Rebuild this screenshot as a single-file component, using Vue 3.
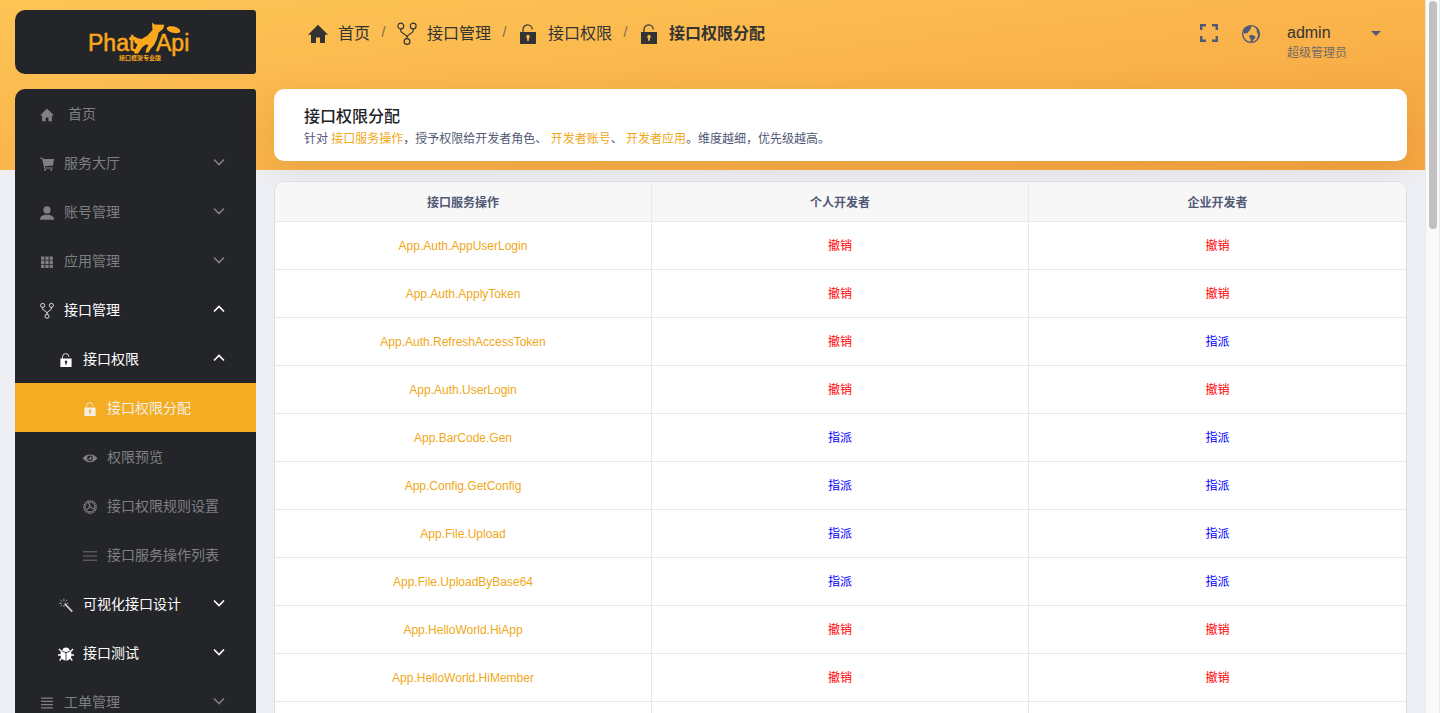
<script setup>
const icons = {
  home: '<path fill="currentColor" d="M10 0.8 0 10.8h3V19h5v-5.6h4V19h5v-8.2h3z"/>',
  cart: '<path fill="currentColor" d="M0 1h4l.8 2H20l-1.400 9-11.800 1.200.4 1.800H18v1.400H6L3 2.500H0z"/><circle cx="7.500" cy="18.200" r="1.500" fill="currentColor"/><circle cx="16" cy="18.200" r="1.500" fill="currentColor"/>',
  user: '<circle cx="10" cy="5.600" r="5.200" fill="currentColor"/><path fill="currentColor" d="M0 19.500c0-4.800 4-7 10-7s10 2.200 10 7z"/>',
  grid: '<path fill="currentColor" d="M1.500 2h4.700v4.700H1.500zM7.600 2h4.700v4.700H7.600zM13.700 2h4.700v4.700h-4.700zM1.500 8h4.700v4.700H1.500zM7.600 8h4.700v4.700H7.600zM13.700 8h4.700v4.700h-4.700zM1.500 14h4.700v4.700H1.500zM7.600 14h4.700v4.700H7.600zM13.700 14h4.700v4.700h-4.700z"/>',
  fork: '<g fill="none" stroke="currentColor" stroke-width="1.200"><circle cx="3.800" cy="2" r="2.900"/><circle cx="16.200" cy="2" r="2.900"/><circle cx="10" cy="17.500" r="2.900"/><path d="M3.800 5v2c0 2.500 6.200 3.100 6.200 6V14.600M16.200 5v2c0 2.500-6.200 3.100-6.200 6"/></g>',
  lock: '<path fill="currentColor" fill-rule="evenodd" d="M2 8h16v12H2zM10 10.800a1.900 1.900 0 0 0-.9 3.500v2.500h1.800v-2.500a1.900 1.900 0 0 0-.9-3.500z"/><path fill="none" stroke="currentColor" stroke-width="1.200" d="M5 8V5.500a4.600 4.600 0 0 1 9.200 0"/>',
  eye: '<path fill="currentColor" fill-rule="evenodd" d="M-.5 10.500C2.500 6.500 6 5 10 5s7.500 1.500 10.500 5.500C17.500 14.500 14 16 10 16S2.500 14.500-.5 10.500zM10 6.500a4 4 0 1 0 0 8 4 4 0 0 0 0-8z"/><path fill="currentColor" d="M10 8a2.500 2.500 0 1 1-2.500 2.500L10 10.500z"/>',
  gear: '<g fill="none" stroke="currentColor"><circle cx="10" cy="10" r="8.800" stroke-width="2.200" stroke-dasharray="2.400 1.200"/><circle cx="10" cy="10" r="7" stroke-width="1.400"/><circle cx="10" cy="10" r="1.600" stroke-width="1.200"/><path stroke-width="1.600" d="M10 8.500 7.500 3.500M11.500 10.800l4.800 2M8.700 11l-4 3.500"/></g>',
  lines: '<path fill="none" stroke="currentColor" stroke-width="1.200" d="M0 4h20M0 10h20M0 16h20"/>',
  wand: '<path fill="none" stroke="currentColor" stroke-opacity=".8" stroke-width="2.200" d="M8 8 19 19.500"/><path fill="none" stroke="currentColor" stroke-opacity=".7" stroke-width="1.100" d="M7 4.500V1M7 13V10M4 7.500H0M13.500 7.500H10.500M4.500 5 2 2.500M9.500 5 12 2.500M4.500 9.500 2 12"/>',
  bug: '<path fill="currentColor" d="M4.500 5.200C5.200 2 7.200.8 10 .8s4.800 1.200 5.500 4.400L10 7.500zM9.400 8.500 3.500 6C2.200 8 2 10 2.200 12.200c.3 4.200 3 6.700 7.200 7.300zM10.600 8.500 16.500 6c1.300 2 1.500 4 1.300 6.200-.3 4.200-3 6.700-7.200 7.300z"/><path fill="none" stroke="currentColor" stroke-width="2" d="M4.500 7.500 0 3M15.500 7.500 20 3M4 11.500H-1.500M16 11.500h5.500M4.500 14.500 1 19.500M15.500 14.500 19 19.500"/>',
  list: '<path fill="none" stroke="currentColor" stroke-width="1.800" d="M1.500 3h17M1.500 7.700h17M1.500 12.400h17M1.500 17.100h17"/>',
}

const menu = [
  { label: '首页', icon: 'home', level: 1, home: true },
  { label: '服务大厅', icon: 'cart', level: 1, arrow: 'down' },
  { label: '账号管理', icon: 'user', level: 1, arrow: 'down' },
  { label: '应用管理', icon: 'grid', level: 1, arrow: 'down' },
  { label: '接口管理', icon: 'fork', level: 1, arrow: 'up', open: true },
  { label: '接口权限', icon: 'lock', level: 2, arrow: 'up', open: true },
  { label: '接口权限分配', icon: 'lock', level: 3, active: true },
  { label: '权限预览', icon: 'eye', level: 3 },
  { label: '接口权限规则设置', icon: 'gear', level: 3 },
  { label: '接口服务操作列表', icon: 'lines', level: 3 },
  { label: '可视化接口设计', icon: 'wand', level: 2, arrow: 'down', open: true },
  { label: '接口测试', icon: 'bug', level: 2, arrow: 'down', open: true },
  { label: '工单管理', icon: 'list', level: 1, arrow: 'down' },
]

const crumbs = [
  { label: '首页', icon: 'home' },
  { label: '接口管理', icon: 'fork' },
  { label: '接口权限', icon: 'lock' },
  { label: '接口权限分配', icon: 'lock', current: true },
]

const rows = [
  { name: 'App.Auth.AppUserLogin', granted: [true, true] },
  { name: 'App.Auth.ApplyToken', granted: [true, true] },
  { name: 'App.Auth.RefreshAccessToken', granted: [true, false] },
  { name: 'App.Auth.UserLogin', granted: [true, true] },
  { name: 'App.BarCode.Gen', granted: [false, false] },
  { name: 'App.Config.GetConfig', granted: [false, false] },
  { name: 'App.File.Upload', granted: [false, false] },
  { name: 'App.File.UploadByBase64', granted: [false, false] },
  { name: 'App.HelloWorld.HiApp', granted: [true, true] },
  { name: 'App.HelloWorld.HiMember', granted: [true, true] },
]
</script>

<template>
  <div class="window">
    <div class="page">
      <aside class="sidebar">
        <a class="brand" href="#" aria-label="PhalApi">
          <svg class="logo" viewBox="0 0 120 55">
            <g fill="#fba91a">
              <text class="logo-word" x="7" y="36">Phat</text>
              <text class="logo-word" x="75" y="36">Api</text>
              <text class="logo-sub" x="38" y="45">接口框架专业版</text>
              <path d="M71 7.500 73.500 9.600 83.500 9.800 82 14 77.500 17.800 76 24 73 30 69.500 34 67.500 37.500 64.500 37.500 65.500 33.500 67.500 30 65 29.500 61 32.500 57 38.500 54 38.800 53 37 55 32.500 56.500 29.500 54 28 52.500 24.500 49 25 48.500 22.500 52 21 57 23.200 60.500 24 66.500 20.500 71.500 15z"/>
              <ellipse cx="92.500" cy="14.700" rx="7" ry="3.200" transform="rotate(14 92.500 14.700)"/>
            </g>
          </svg>
        </a>
        <nav class="menu">
          <a
            v-for="item in menu"
            :key="item.label + item.level"
            href="#"
            class="item"
            :class="['level-' + item.level, { open: item.open, active: item.active, first: item.home }]"
          >
            <svg class="item-icon" viewBox="0 0 20 20" v-html="icons[item.icon]"></svg>
            <span class="item-label">{{ item.label }}</span>
            <svg v-if="item.arrow" class="arrow" viewBox="0 0 12 8">
              <path :d="item.arrow === 'up' ? 'M1 6.500 6 1.500 11 6.500' : 'M1 1.500 6 6.500 11 1.500'" />
            </svg>
          </a>
        </nav>
      </aside>

      <div class="content">
        <header class="topbar">
          <nav class="crumbs">
            <template v-for="(crumb, i) in crumbs" :key="crumb.label">
              <span v-if="i" class="slash">/</span>
              <a href="#" class="crumb" :class="{ current: crumb.current }">
                <svg class="crumb-icon" viewBox="0 0 20 20" v-html="icons[crumb.icon]"></svg>
                <span>{{ crumb.label }}</span>
              </a>
            </template>
          </nav>
          <div class="tools">
            <button class="tool" type="button" aria-label="全屏">
              <svg viewBox="0 0 20 20"><path fill="none" stroke="currentColor" stroke-width="2.400" d="M2.200 7V2.200H7M13 2.200h4.800V7M17.800 13v4.800H13M7 17.800H2.200V13" /></svg>
            </button>
            <button class="tool globe" type="button" aria-label="语言">
              <svg viewBox="0 0 20 20">
                <circle cx="10" cy="10" r="8.400" fill="none" stroke="currentColor" stroke-width="1.400" />
                <path fill="currentColor" d="M2.500 6C4 3.500 6.500 1.800 10 1.500l-.3 1.700 1 1-1.700.6.3 1.500L7.500 7.500l-1.200 2-1.600-.7-.6 1.200-1.600-1.500zM8.500 11.200l2.500-.4 3.500 1.700-.6 2.200-1.900 1.200-1 2.400-1.300-.4-.1-3.100L8 13z" />
                <path fill="currentColor" d="M13.500 2.300c3 1.300 5.300 4.200 5.200 7.700 0 2.500-1 4.800-2.500 6.200l-.2-2 1-2.200-.3-2.700-1.200-1.800L16 6z" />
              </svg>
            </button>
            <button class="account" type="button">
              <span class="who">
                <span class="name">admin</span>
                <span class="role">超级管理员</span>
              </span>
              <span class="caret"></span>
            </button>
          </div>
        </header>

        <main>
          <section class="intro">
            <h1>接口权限分配</h1>
            <p>针对 <a href="#">接口服务操作</a>，授予权限给开发者角色、 <a href="#">开发者账号</a>、 <a href="#">开发者应用</a>。维度越细，优先级越高。</p>
          </section>
          <table class="grants">
            <thead>
              <tr>
                <th scope="col">接口服务操作</th>
                <th scope="col">个人开发者</th>
                <th scope="col">企业开发者</th>
              </tr>
            </thead>
            <tbody>
              <tr v-for="row in rows" :key="row.name">
                <td><a href="#">{{ row.name }}</a></td>
                <td v-for="(granted, i) in row.granted" :key="i">
                  <button type="button" :class="granted ? 'revoke' : 'assign'">{{ granted ? '撤销' : '指派' }}</button>
                </td>
              </tr>
              <tr>
                <td></td>
                <td></td>
                <td></td>
              </tr>
            </tbody>
          </table>
        </main>
      </div>
    </div>
    <div class="scrollbar"><div class="thumb"></div></div>
  </div>
</template>

<style>
body {
  overflow: hidden;
}
</style>

<style scoped>
.window,
.window * {
  box-sizing: border-box;
}
.window {
  display: flex;
  height: 100vh;
  overflow: hidden;
  font-family: "Liberation Sans", "Noto Sans CJK SC", sans-serif;
  font-size: 12px;
  color: #515975;
}
a {
  color: inherit;
  text-decoration: none;
}
button {
  padding: 0;
  border: 0;
  background: none;
  font: inherit;
  color: inherit;
  cursor: pointer;
}
svg {
  display: block;
  flex: none;
  overflow: visible;
}
.page {
  flex: 1;
  min-width: 0;
  display: flex;
  gap: 18px;
  padding: 0 18px 0 15px;
  overflow: hidden;
  background: linear-gradient(to bottom right, #fdc556 0%, #f7a440 100%) 0 0 / 100% 170px no-repeat #eeeff4;
}
.sidebar {
  flex: none;
  width: 241px;
  padding-top: 10px;
}
.brand {
  display: flex;
  justify-content: center;
  height: 64px;
  margin-bottom: 15px;
  padding: 5px 0 0 10px;
  border-radius: 10px 3px 3px 10px;
  background: #242529;
}
.logo {
  width: 120px;
  height: 55px;
}
.logo-word {
  font-size: 23px;
  stroke: #fba91a;
  stroke-width: 0.5px;
}
.logo-sub {
  font-size: 6px;
  font-weight: 700;
}
.menu {
  border-radius: 10px 3px 0 0;
  background: #242529;
}
.item {
  display: flex;
  align-items: center;
  gap: 10px;
  height: 49px;
  padding-right: 31px;
  font-size: 14px;
  color: #7f7f84;
}
.item.level-1 {
  padding-left: 25px;
}
.item.level-2 {
  padding-left: 44px;
}
.item.level-3 {
  padding-left: 68px;
}
.item.first {
  gap: 14px;
}
.item.open {
  color: #fff;
}
.item.active {
  background: #f4ad22;
  color: #f2eee4;
}
.item-icon {
  width: 14px;
  height: 14px;
  margin-top: 2px;
}
.item-label {
  flex: 1;
  padding-bottom: 2px;
}
.arrow {
  width: 12px;
  height: 8px;
  margin-bottom: 1px;
}
.arrow path {
  fill: none;
  stroke: currentColor;
  stroke-width: 1.6px;
}
.content {
  flex: 1;
  min-width: 0;
}
.topbar {
  display: flex;
  justify-content: space-between;
  height: 89px;
  padding: 19px 26px 0 34px;
}
.crumbs {
  display: flex;
  height: 26px;
  align-items: center;
  font-size: 16px;
  color: #333;
}
.crumb {
  display: flex;
  align-items: center;
  gap: 10px;
}
.crumb.current {
  font-weight: 700;
}
.crumb-icon {
  width: 20px;
  height: 20px;
  margin-top: 4px;
}
.slash {
  width: 27px;
  text-align: center;
  font-size: 14px;
  color: #7b6b52;
}
.tools {
  display: flex;
  align-items: flex-start;
}
.tool {
  margin: 4px 22px 0 0;
}
.tool svg {
  width: 20px;
  height: 20px;
}
.globe {
  margin: 5px 26px 0 0;
}
.account {
  display: flex;
  gap: 24px;
  margin-top: 2px;
  text-align: left;
}
.who {
  display: flex;
  flex-direction: column;
}
.name {
  font-size: 16px;
  line-height: 24px;
  color: #333;
}
.role {
  line-height: 16px;
  color: #726b66;
}
.caret {
  margin-top: 10px;
  border: 5px solid transparent;
  border-top-color: currentColor;
  border-bottom: 0;
}
.intro {
  height: 72px;
  margin-bottom: 20px;
  padding: 16px 30px 0;
  border-radius: 10px;
  background: #fff;
  box-shadow: 0 8px 30px rgba(100, 80, 50, 0.12);
}
.intro h1 {
  margin: 0;
  font-size: 16px;
  line-height: 24px;
  font-weight: 500;
  color: #212229;
}
.intro p {
  margin: 0;
  line-height: 20px;
}
.intro a,
.grants a {
  color: #f0a818;
}
.grants {
  width: 100%;
  table-layout: fixed;
  border-collapse: separate;
  border-spacing: 0;
  border: 1px solid #dcdde2;
  border-radius: 10px;
  overflow: hidden;
  background: #fff;
}
.grants th,
.grants td {
  height: 48px;
  padding: 0;
  border-right: 1px solid #e8e8e8;
  border-bottom: 1px solid #e8e8e8;
  text-align: center;
  line-height: 18px;
}
.grants th {
  height: 40px;
  padding-top: 2px;
  background: #f7f7f7;
  font-weight: 700;
}
.grants th:last-child,
.grants td:last-child {
  border-right: 0;
}
.revoke {
  color: #f00;
}
.assign {
  color: #00f;
}
.scrollbar {
  flex: none;
  width: 15px;
  padding: 1px 2px 0 3px;
  border: 0 solid #e8e8e8;
  border-width: 0 1px;
  background: #fafafa;
}
.thumb {
  width: 8px;
  height: 32%;
  border-radius: 4px;
  background: #c1c1c1;
}
</style>
